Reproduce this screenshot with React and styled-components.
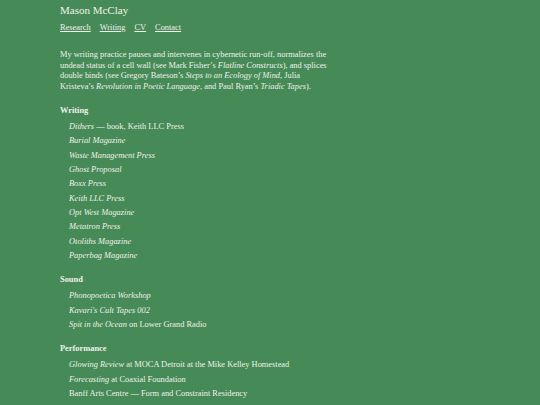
import React from 'react'
import styled, { createGlobalStyle } from 'styled-components';

const GlobalStyle = createGlobalStyle`
    html, body {
        margin:0;
        padding:0;
        background-color:#468b57;
    }
    body {
        font-family:"Liberation Serif", "Times New Roman", serif;
        color:#f0f0ea;
    }
`;

const Page = styled.div`
    width:540px;
    min-height:405px;
    padding:3px 0 0 60px;
    box-sizing:border-box;
`;

const Title = styled.h1`
    margin:0;
    font-size:11px;
    font-weight:normal;
    line-height:14px;
`;

const Nav = styled.nav`
    display:flex;
    gap:9px;
    margin-top:6px;
    font-size:8.4px;
    line-height:10px;
`;

const NavLink = styled.a`
    color:inherit;
    text-decoration:underline;
`;

const Intro = styled.p`
    margin:17px 0 0;
    width:275px;
    font-size:8.4px;
    line-height:10.7px;
`;

const Section = styled.section`
    margin-top:${({first}) => first ? '13px' : '12px'};
`;

const Heading = styled.h2`
    margin:0;
    font-size:8.4px;
    font-weight:bold;
    line-height:10px;
`;

const List = styled.ul`
    list-style:none;
    margin:4px 0 0;
    padding-left:9px;
`;

const Item = styled.li`
    font-size:8.4px;
    line-height:14.35px;
`;

const sections = [
    {
        title:'Writing',
        items:[
            [<i>Dithers</i>, ' — book, Keith LLC Press'],
            [<i>Burial Magazine</i>],
            [<i>Waste Management Press</i>],
            [<i>Ghost Proposal</i>],
            [<i>Boxx Press</i>],
            [<i>Keith LLC Press</i>],
            [<i>Opt West Magazine</i>],
            [<i>Metatron Press</i>],
            [<i>Otoliths Magazine</i>],
            [<i>Paperbag Magazine</i>],
        ]
    },
    {
        title:'Sound',
        items:[
            [<i>Phonopoetica Workshop</i>],
            [<i>Kavari's Cult Tapes 002</i>],
            [<i>Spit in the Ocean</i>, ' on Lower Grand Radio'],
        ]
    },
    {
        title:'Performance',
        items:[
            [<i>Glowing Review</i>, ' at MOCA Detroit at the Mike Kelley Homestead'],
            [<i>Forecasting</i>, ' at Coaxial Foundation'],
            ['Banff Arts Centre — Form and Constraint Residency'],
        ]
    },
]

const App = () => {
  return (
    <Page>
        <GlobalStyle/>
        <Title>Mason McClay</Title>
        <Nav>
            {['Research','Writing','CV','Contact'].map((label) => (
                <NavLink key={label} href="#">{label}</NavLink>
            ))}
        </Nav>
        <Intro>
            My writing practice pauses and intervenes in cybernetic run-off, normalizes the undead status of a cell wall (see Mark Fisher’s <i>Flatline Constructs</i>), and splices double binds (see Gregory Bateson’s <i>Steps to an Ecology of Mind</i>, Julia Kristeva’s <i>Revolution in Poetic Language</i>, and Paul Ryan’s <i>Triadic Tapes</i>).
        </Intro>
        {sections.map((section, i) => (
            <Section key={section.title} first={i === 0}>
                <Heading>{section.title}</Heading>
                <List>
                    {section.items.map((parts, j) => (
                        <Item key={j}>{parts.map((p, k) => <React.Fragment key={k}>{p}</React.Fragment>)}</Item>
                    ))}
                </List>
            </Section>
        ))}
    </Page>
  )
}

export default App
